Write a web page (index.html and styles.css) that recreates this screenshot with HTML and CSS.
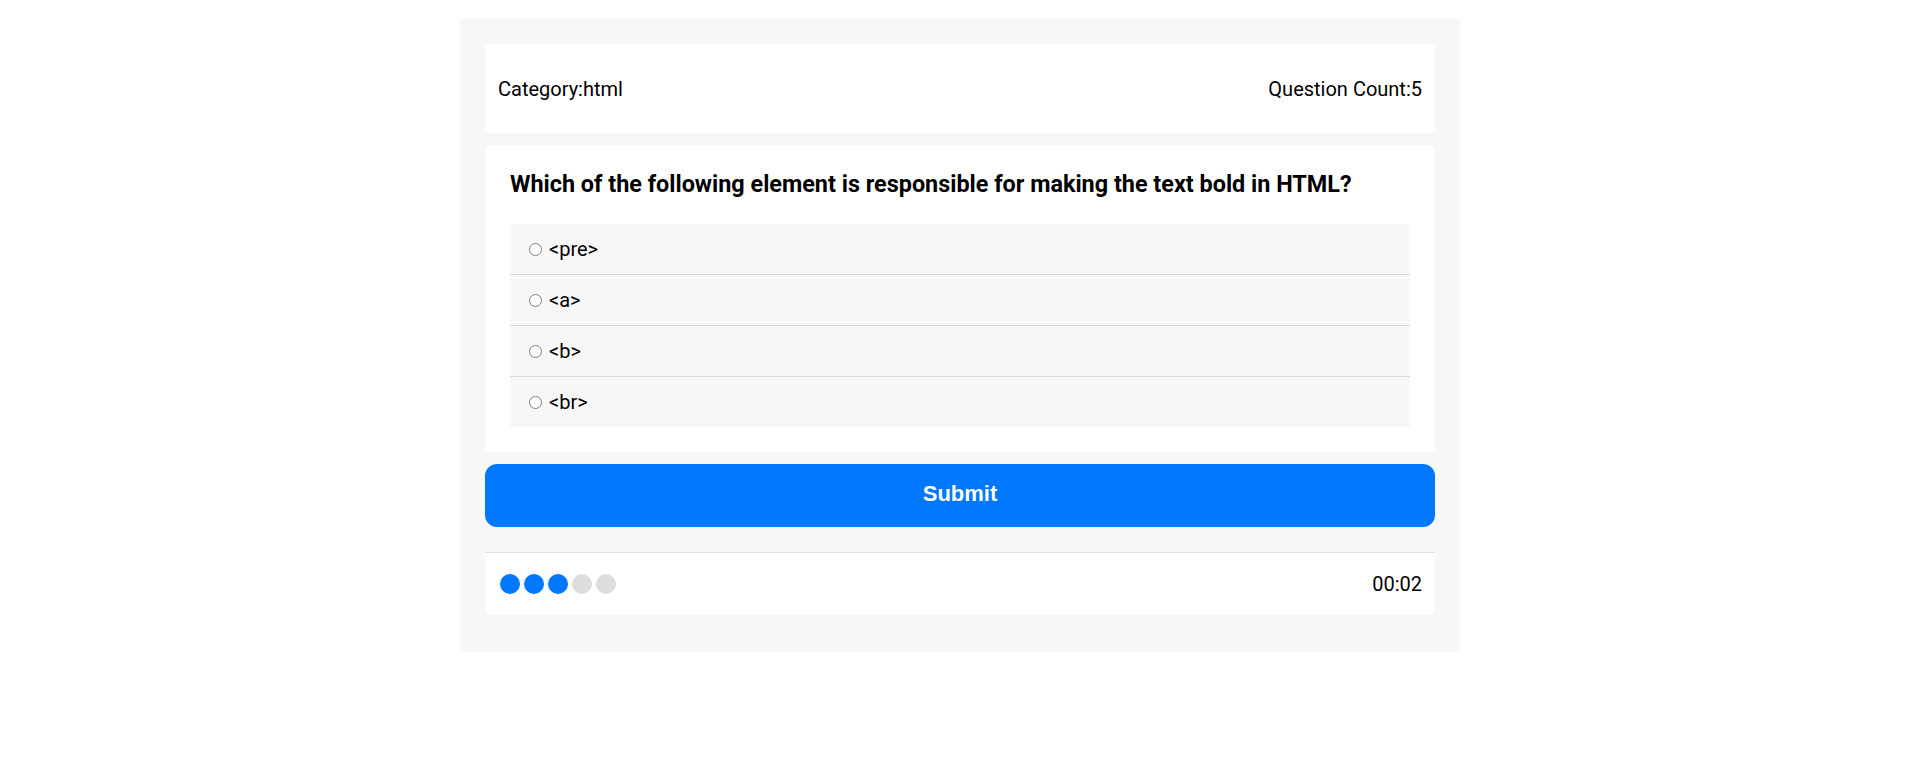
FILE: index.html
```html
<!DOCTYPE html>
<html lang="en">
<head>
<meta charset="utf-8">
<title>Quiz</title>
<link rel="stylesheet" href="styles.css">
</head>
<body>
<div class="quiz">
  <div class="quiz-header">
    <span>Category:html</span>
    <span>Question Count:5</span>
  </div>
  <div class="question-card">
    <h3 class="question-title">Which of the following element is responsible for making the text bold in HTML?</h3>
    <ul class="options">
      <li class="option"><input type="radio" name="answer" id="o1"><label for="o1">&lt;pre&gt;</label></li>
      <li class="option"><input type="radio" name="answer" id="o2"><label for="o2">&lt;a&gt;</label></li>
      <li class="option"><input type="radio" name="answer" id="o3"><label for="o3">&lt;b&gt;</label></li>
      <li class="option"><input type="radio" name="answer" id="o4"><label for="o4">&lt;br&gt;</label></li>
    </ul>
  </div>
  <button class="submit-btn" type="button">Submit</button>
  <div class="quiz-footer">
    <div class="bullets">
      <span class="bullet on"></span>
      <span class="bullet on"></span>
      <span class="bullet on"></span>
      <span class="bullet"></span>
      <span class="bullet"></span>
    </div>
    <div class="timer">00:02</div>
  </div>
</div>
</body>
</html>
```

FILE: styles.css
```css
* { box-sizing: border-box; }

body {
  margin: 0;
  background: #fff;
  font-family: Roboto, "Liberation Sans", Arial, sans-serif;
  color: #000;
}

.quiz {
  width: 1000px;
  margin: 19px auto 0;
  background: #f7f7f7;
  padding: 25px 25px 38px;
}

.quiz-header {
  height: 89px;
  background: #fff;
  display: flex;
  align-items: center;
  justify-content: space-between;
  padding: 0 13px;
  font-size: 20px;
  margin-bottom: 13px;
}

.question-card {
  background: #fff;
  padding: 25px;
}

.question-title {
  margin: 0 0 26px;
  font-size: 23.4px;
  line-height: 27px;
  font-weight: 700;
}

.options {
  list-style: none;
  margin: 0;
  padding: 0;
  background: #f7f7f7;
}

.option {
  height: 50px;
  display: flex;
  align-items: center;
  padding-left: 19px;
  font-size: 20px;
  border-top: 1px solid #d9d9d9;
}
.option:first-child { border-top: none; }
.option:not(:first-child) { height: 51px; }

.option input {
  -webkit-appearance: none;
  appearance: none;
  margin: 0 7px 0 0;
  width: 13px;
  height: 13px;
  border: 1px solid #808080;
  border-radius: 50%;
  background: #fff;
  flex: none;
}

.submit-btn {
  display: block;
  width: 100%;
  height: 63px;
  margin-top: 12px;
  padding: 0 0 4px;
  border: none;
  border-radius: 12px;
  background: #0077ff;
  color: #fff;
  font-family: "Liberation Sans", Arial, sans-serif;
  font-weight: 700;
  font-size: 22px;
}

.quiz-footer {
  margin-top: 25px;
  height: 62px;
  background: #fff;
  border-top: 1px solid #dddddd;
  display: flex;
  align-items: center;
  justify-content: space-between;
  padding: 0 13px 0 15px;
  font-size: 20px;
}

.bullets {
  display: flex;
  gap: 4px;
}

.bullet {
  width: 20px;
  height: 20px;
  border-radius: 50%;
  background: #dddddd;
}
.bullet.on { background: #0077ff; }
```
